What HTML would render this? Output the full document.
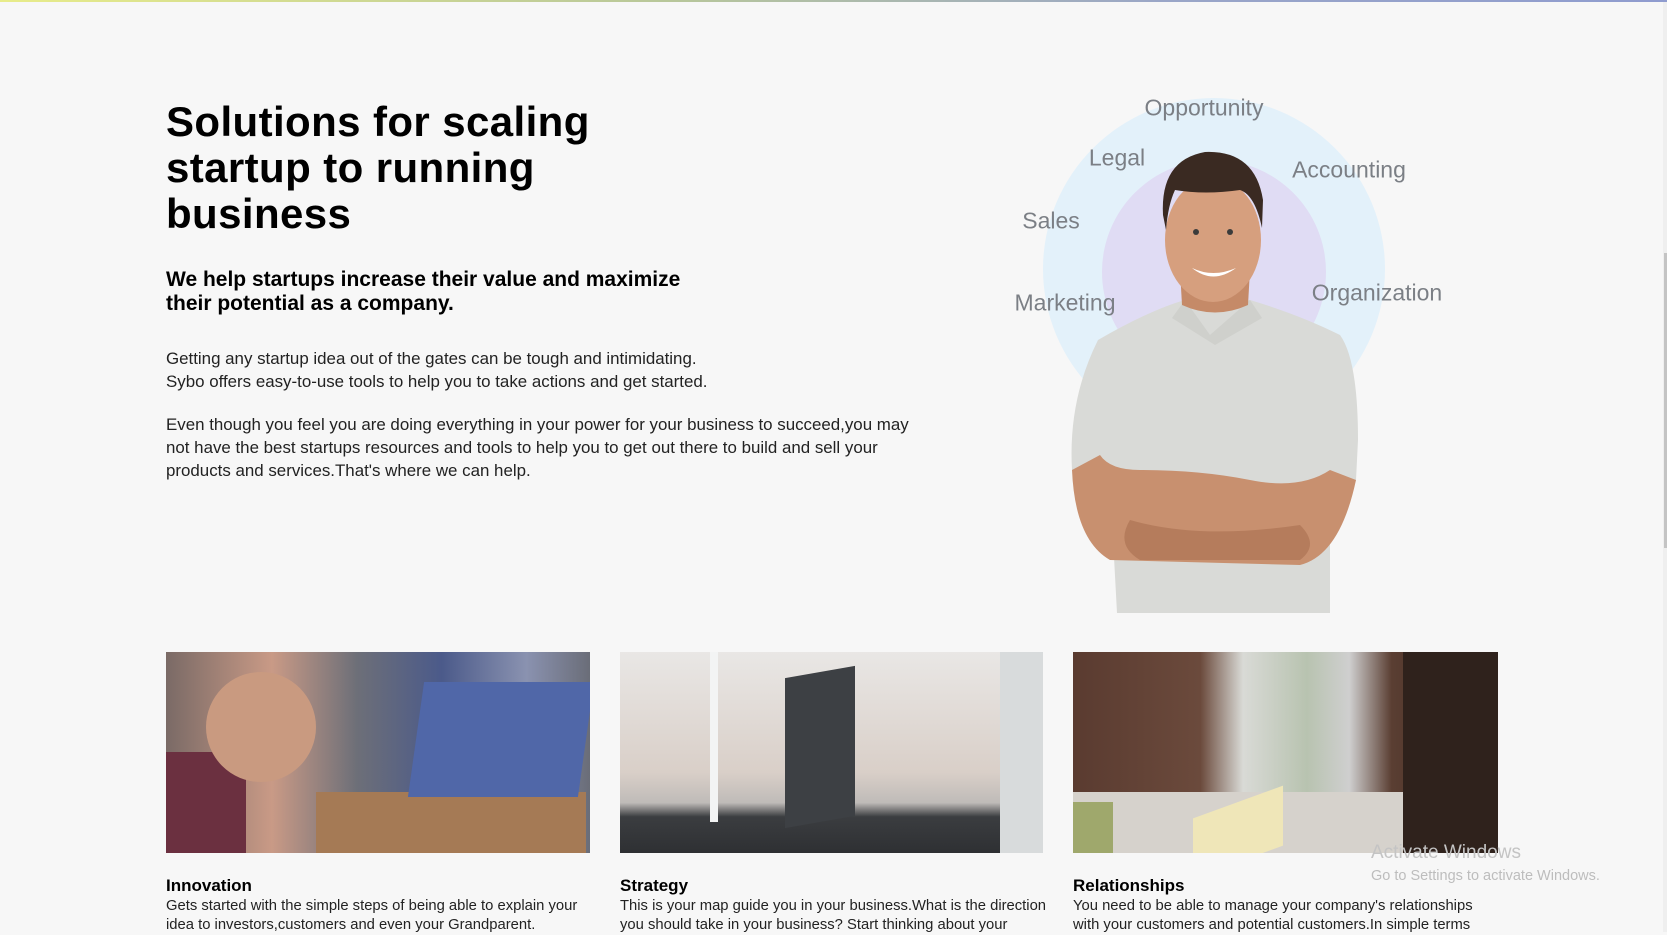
<!DOCTYPE html>
<html><head><meta charset="utf-8"><style>
html,body{margin:0;padding:0;}
body{width:1667px;height:932px;overflow:hidden;background:#f7f7f7;font-family:"Liberation Sans",Arial,sans-serif;color:#111;position:relative;}
.topbar{position:absolute;left:0;top:0;width:1667px;height:2px;background:linear-gradient(90deg,#e8ec8a,#b8c79a 40%,#9aa6c8 70%,#8f9ccf);}
.sb{position:absolute;right:0;top:2px;width:4px;height:930px;background:#efefef;}
.sbt{position:absolute;right:0;top:253px;width:3px;height:295px;background:#c4c4c4;}
.abs{position:absolute;white-space:nowrap;}
h1{position:absolute;left:166px;top:99px;margin:0;font-size:42px;line-height:46px;font-weight:bold;color:#000;letter-spacing:0.4px;}
.sub{left:166px;top:268px;font-size:21px;line-height:24px;font-weight:bold;color:#000;}
.p{left:166px;font-size:16.9px;line-height:23px;color:#222;}
.lbl{position:absolute;font-size:23px;color:#7b7f85;white-space:nowrap;transform:translate(-50%,-50%);}
.img{position:absolute;top:652px;height:201px;overflow:hidden;}
.ct{position:absolute;top:876px;font-size:17px;font-weight:bold;color:#000;}
.cx{position:absolute;top:897px;font-size:14.8px;line-height:19px;color:#222;white-space:nowrap;}
.wm{position:absolute;color:#c4c4c4;white-space:nowrap;}
</style></head><body>
<div class="topbar"></div>
<div class="sb"></div><div class="sbt"></div>

<h1>Solutions for scaling<br>startup to running<br>business</h1>
<div class="abs sub">We help startups increase their value and maximize<br>their potential as a company.</div>
<div class="abs p" style="top:347px">Getting any startup idea out of the gates can be tough and intimidating.<br>Sybo offers easy-to-use tools to help you to take actions and get started.</div>
<div class="abs p" style="top:413px">Even though you feel you are doing everything in your power for your business to succeed,you may<br>not have the best startups resources and tools to help you to get out there to build and sell your<br>products and services.That's where we can help.</div>

<svg style="position:absolute;left:0;top:0" width="1667" height="640">
 <circle cx="1214" cy="269" r="171" fill="#e3f1fa"/>
 <circle cx="1214" cy="272" r="112" fill="#e0dcf4"/>
 <path d="M1098 340 Q1150 310 1185 300 L1250 300 Q1300 315 1340 335 Q1358 360 1358 440 L1356 480 L1330 520 L1330 613 L1117 613 L1112 520 L1072 470 Q1068 400 1098 340 Z" fill="#d9dad7"/>
 <path d="M1185 300 L1210 335 L1250 300 L1262 318 L1215 345 L1172 318 Z" fill="#cfd0cc"/>
 <path d="M1072 470 Q1075 540 1110 560 L1300 565 Q1340 555 1356 480 L1330 470 Q1300 490 1250 480 Q1200 470 1140 470 Q1110 470 1100 455 Z" fill="#c8906f"/>
 <path d="M1130 520 Q1200 540 1300 525 Q1320 545 1300 560 L1140 560 Q1115 545 1130 520 Z" fill="#b57c5c"/>
 <path d="M1180 270 L1250 270 L1248 305 Q1215 320 1182 305 Z" fill="#c58a68"/>
 <ellipse cx="1213" cy="240" rx="48" ry="62" fill="#d69f7e"/>
 <path d="M1163 215 Q1160 160 1205 152 Q1255 150 1263 200 L1262 228 Q1255 195 1240 190 Q1205 195 1175 190 Q1168 205 1166 230 Z" fill="#3a2a22"/>
 <path d="M1192 268 Q1213 285 1236 268 Q1213 278 1192 268 Z" fill="#fff"/>
 <circle cx="1196" cy="232" r="3" fill="#3b3b3b"/><circle cx="1230" cy="232" r="3" fill="#3b3b3b"/>
</svg>
<div class="lbl" style="left:1204px;top:108px">Opportunity</div>
<div class="lbl" style="left:1117px;top:158px">Legal</div>
<div class="lbl" style="left:1349px;top:170px">Accounting</div>
<div class="lbl" style="left:1051px;top:221px">Sales</div>
<div class="lbl" style="left:1065px;top:303px">Marketing</div>
<div class="lbl" style="left:1377px;top:293px">Organization</div>

<div class="img" style="left:166px;width:424px;background:linear-gradient(90deg,#7a6a66 0%,#c99a86 25%,#6d6f78 45%,#4b5a8a 65%,#8a92b0 85%,#6a6d78 100%);">
 <div style="position:absolute;left:150px;top:140px;width:270px;height:61px;background:#a57a55"></div>
 <div style="position:absolute;left:250px;top:30px;width:170px;height:115px;background:#5067a8;transform:skewX(-8deg)"></div>
 <div style="position:absolute;left:0;top:100px;width:80px;height:101px;background:#6b3040"></div>
 <div style="position:absolute;left:40px;top:20px;width:110px;height:110px;border-radius:50%;background:#c99a80"></div>
</div>
<div class="img" style="left:620px;width:423px;background:linear-gradient(180deg,#e9e7e5 0%,#d9cfc8 60%,#bfbbb8 75%,#3b3d40 82%,#2e3033 100%);">
 <div style="position:absolute;left:220px;top:20px;width:10px;height:130px;background:#333"></div>
 <div style="position:absolute;left:165px;top:20px;width:70px;height:150px;background:#3d4044;transform:skewY(-10deg)"></div>
 <div style="position:absolute;left:90px;top:0;width:8px;height:170px;background:#f3f4f4"></div>
 <div style="position:absolute;left:380px;top:0;width:43px;height:201px;background:#d8dbdc"></div>
</div>
<div class="img" style="left:1073px;width:425px;background:linear-gradient(90deg,#5a3b30 0%,#6b4a3c 30%,#d9dad6 40%,#b8c3b0 55%,#cfcfcf 65%,#5a3e32 75%,#3a2a22 100%);">
 <div style="position:absolute;left:0;top:140px;width:425px;height:61px;background:#d6d2cc"></div>
 <div style="position:absolute;left:120px;top:150px;width:90px;height:60px;background:#efe6b8;transform:skewY(-20deg)"></div>
 <div style="position:absolute;left:330px;top:0;width:95px;height:201px;background:#2f221c"></div>
 <div style="position:absolute;left:0;top:150px;width:40px;height:51px;background:#9fa86c"></div>
</div>

<div class="ct" style="left:166px">Innovation</div>
<div class="cx" style="left:166px">Gets started with the simple steps of being able to explain your<br>idea to investors,customers and even your Grandparent.</div>
<div class="ct" style="left:620px">Strategy</div>
<div class="cx" style="left:620px">This is your map guide you in your business.What is the direction<br>you should take in your business? Start thinking about your</div>
<div class="ct" style="left:1073px">Relationships</div>
<div class="cx" style="left:1073px">You need to be able to manage your company's relationships<br>with your customers and potential customers.In simple terms</div>

<div class="wm" style="left:1371px;top:842px;font-size:19px">Activate Windows</div>
<div class="wm" style="left:1371px;top:868px;font-size:14.5px;color:#bdbdbd">Go to Settings to activate Windows.</div>
</body></html>
